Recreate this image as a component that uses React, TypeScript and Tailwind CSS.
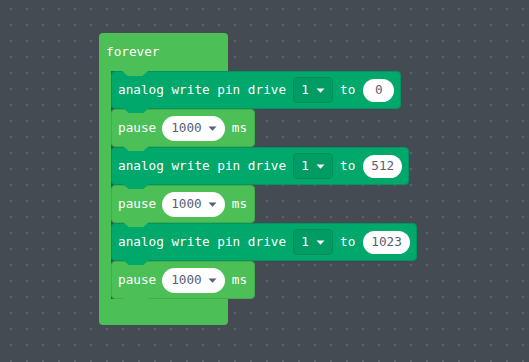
import React from "react";

const FONT = "font-['DejaVu_Sans_Mono',monospace] text-[12.7px]";

const Caret = ({ color }: { color: string }) => (
  <svg width="9" height="5" viewBox="0 0 9 5" className="shrink-0">
    <path d="M0.5 0.5 L8.5 0.5 L4.5 4.8 Z" fill={color} />
  </svg>
);

// tab hanging under a block, drawn over the next one
const Tab = ({ color }: { color: string }) => (
  <div
    className="absolute left-[11px] top-full z-10 h-[5px] w-[26px] [clip-path:polygon(0_0,100%_0,78%_100%,22%_100%)]"
    style={{ background: color }}
  />
);

const Oval = ({ children }: { children: React.ReactNode }) => (
  <div className="flex h-[23px] min-w-[31px] items-center justify-center rounded-full bg-white px-2 text-[#575e75]">
    {children}
  </div>
);

const AnalogWrite = ({ value }: { value: string }) => (
  <div className="relative flex h-[38px] items-center self-start rounded-[4px] border border-[#00955f] bg-[#00a86b] pl-[6px] pr-[6px] text-white">
    <span>analog write pin drive</span>
    <div className="ml-[7px] flex h-[26px] w-[40px] items-center justify-center gap-[7px] rounded-[4px] border border-[#008f5b] bg-[#009c63]">
      <span>1</span>
      <Caret color="#ffffff" />
    </div>
    <span className="ml-[7px] mr-[8px]">to</span>
    <Oval>{value}</Oval>
    <Tab color="#00a86b" />
  </div>
);

const Pause = () => (
  <div className="relative flex h-[38px] w-[144px] items-center rounded-[4px] border border-[#42ab4b] bg-[#4cbf56] pl-[6px] text-white">
    <span>pause</span>
    <div className="ml-[6px] flex h-[25px] items-center gap-[6px] rounded-full bg-white pl-[9px] pr-[8px] text-[#575e75]">
      <span>1000</span>
      <Caret color="#575e75" />
    </div>
    <span className="ml-[7px]">ms</span>
    <Tab color="#4cbf56" />
  </div>
);

export default function App() {
  return (
    <div
      className={`h-[362px] w-[529px] overflow-hidden bg-[#454b53] bg-[radial-gradient(circle,#5e646c_0.9px,transparent_1.2px)] bg-[length:16px_16px] bg-[position:3px_1px] pl-[99px] pt-[33px] ${FONT}`}
    >
      <div className="inline-flex flex-col items-start">
        <div className="relative flex h-[38px] w-[129px] items-center rounded-t-[4px] bg-[#4cbf56] pl-[7px] text-white">
          <span>forever</span>
          <div
            className="absolute left-[23px] top-full z-10 h-[5px] w-[26px] bg-[#4cbf56] [clip-path:polygon(0_0,100%_0,78%_100%,22%_100%)]"
          />
        </div>
        <div className="flex">
          <div className="w-[12px] bg-[#4cbf56]" />
          <div className="flex flex-col">
            <AnalogWrite value="0" />
            <Pause />
            <AnalogWrite value="512" />
            <Pause />
            <AnalogWrite value="1023" />
            <Pause />
          </div>
        </div>
        <div className="h-[26px] w-[129px] rounded-b-[4px] bg-[#4cbf56]" />
      </div>
    </div>
  );
}
